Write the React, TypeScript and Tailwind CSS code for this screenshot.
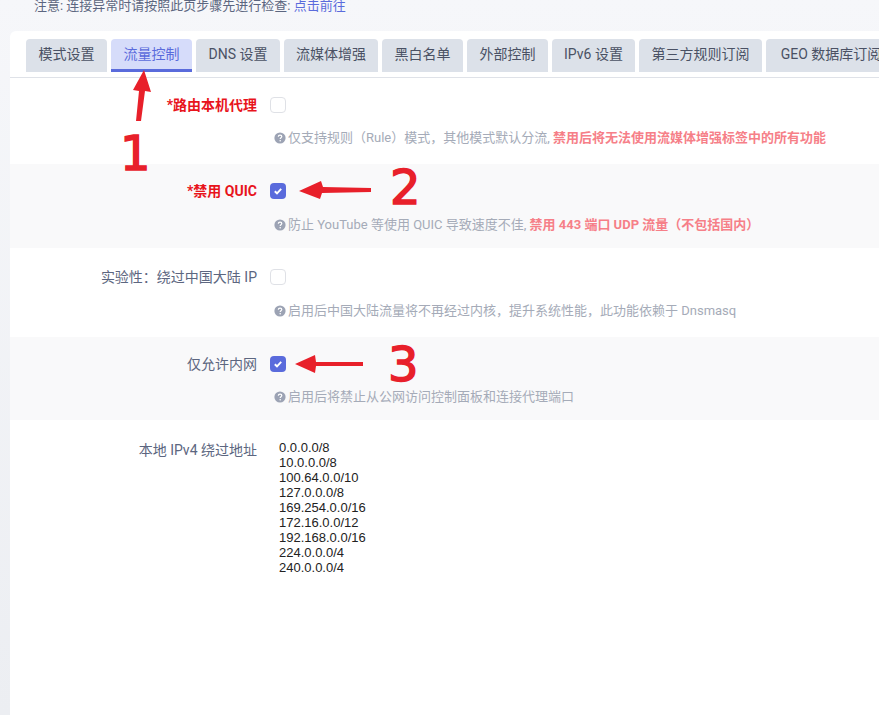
import React from "react";

const font = { fontFamily: '"Roboto","Noto Sans CJK SC","Noto Sans",sans-serif' };

const tabs: { label: string; cls: string; active?: boolean }[] = [
  { label: "模式设置", cls: "w-[81px]" },
  { label: "流量控制", cls: "w-[81px]", active: true },
  { label: "DNS 设置", cls: "w-[84px]" },
  { label: "流媒体增强", cls: "w-[94px]" },
  { label: "黑白名单", cls: "w-[81px]" },
  { label: "外部控制", cls: "w-[81px]" },
  { label: "IPv6 设置", cls: "w-[83px]" },
  { label: "第三方规则订阅", cls: "w-[123px]" },
  { label: "GEO 数据库订阅", cls: "w-[130px]" },
];

function Help() {
  return (
    <svg width="12" height="12" viewBox="0 0 12 12" className="shrink-0">
      <circle cx="6" cy="6" r="5.6" fill="#9ca3b4" />
      <path d="M4.3 4.7c0-1 .8-1.6 1.8-1.6s1.7.6 1.7 1.5c0 1.2-1.6 1.2-1.6 2.4" fill="none" stroke="#fff" strokeWidth="1.2" />
      <circle cx="6.2" cy="8.8" r=".8" fill="#fff" />
    </svg>
  );
}

function Box({ checked }: { checked?: boolean }) {
  return checked ? (
    <span className="flex h-4 w-4 items-center justify-center rounded-[4px] bg-[#5a6bdc]">
      <svg width="10" height="10" viewBox="0 0 10 10">
        <path d="M1.8 5.2 4 7.3 8.2 2.9" fill="none" stroke="#fff" strokeWidth="1.9" />
      </svg>
    </span>
  ) : (
    <span className="block h-4 w-4 rounded-[4px] border border-[#dfe1e6] bg-white" />
  );
}

function Row({
  label,
  red,
  checked,
  gray,
  h,
  top,
  gap,
  children,
}: {
  label: string;
  red?: boolean;
  checked?: boolean;
  gray?: boolean;
  h: string;
  top: string;
  gap: string;
  children: React.ReactNode;
}) {
  return (
    <div className={`flex ${h} ${top} ${gray ? "bg-[#f9f9fa]" : "bg-white"}`}>
      <div
        className={`-mt-px w-[247px] text-right text-[14px] leading-[18px] whitespace-nowrap ${
          red ? "font-bold text-[#e8141c]" : "text-[#5c6680]"
        }`}
      >
        {label}
      </div>
      <div className="ml-[13px] flex flex-col">
        <Box checked={checked} />
        <div className={`${gap} flex items-center gap-[2px] pl-1 text-[13px] leading-[18px] whitespace-nowrap text-[#a5abb8]`}>
          <Help />
          <span>{children}</span>
        </div>
      </div>
    </div>
  );
}

const ips = [
  "0.0.0.0/8",
  "10.0.0.0/8",
  "100.64.0.0/10",
  "127.0.0.0/8",
  "169.254.0.0/16",
  "172.16.0.0/12",
  "192.168.0.0/16",
  "224.0.0.0/4",
  "240.0.0.0/4",
];

const numCls =
  "absolute text-[48px] leading-[50px] font-normal text-[#e8202a] [-webkit-text-stroke:1.5px_#e8202a]";
const numFont = { fontFamily: '"DejaVu Sans",sans-serif' };

export default function App() {
  return (
    <div
      style={font}
      className="relative h-[715px] w-[879px] overflow-hidden bg-gradient-to-b from-[#f6f7fa] to-[#eceef2]"
    >
      <div className="h-[31px] pl-[34px] text-[13px] leading-[11px] text-[#5c6680]">
        注意: 连接异常时请按照此页步骤先进行检查: <span className="text-[#5a6bdc]">点击前往</span>
      </div>
      <div className="ml-[10px] h-[684px] rounded-tl-[6px] bg-white">
        <div className="flex h-[47px] gap-1 overflow-hidden border-b border-[#dfe2e8] pt-2 pl-4">
          {tabs.map((t) => (
            <div
              key={t.label}
              className={`${t.cls} flex h-[33px] shrink-0 items-center justify-center rounded-t-[4px] text-[14px] whitespace-nowrap ${
                t.active
                  ? "border-b-[3px] border-[#5a6bdc] bg-[#d6dcfa] text-[#5a6bdc]"
                  : "bg-[#dce1e9] pb-[3px] text-[#4a5164]"
              }`}
            >
              {t.label}
            </div>
          ))}
        </div>
        <Row label="*路由本机代理" red h="h-[86px]" top="pt-[19px]" gap="mt-4">
          仅支持规则（Rule）模式，其他模式默认分流, <b className="text-[#f67f88]">禁用后将无法使用流媒体增强标签中的所有功能</b>
        </Row>
        <Row label="*禁用 QUIC" red checked gray h="h-[84px]" top="pt-[19px]" gap="mt-[17px]">
          防止 YouTube 等使用 QUIC 导致速度不佳, <b className="text-[#f67f88]">禁用 443 端口 UDP 流量（不包括国内）</b>
        </Row>
        <Row label="实验性：绕过中国大陆 IP" h="h-[89px]" top="pt-[21px]" gap="mt-[17px]">
          启用后中国大陆流量将不再经过内核，提升系统性能，此功能依赖于 Dnsmasq
        </Row>
        <Row label="仅允许内网" checked gray h="h-[83px]" top="pt-[19px]" gap="mt-4">
          启用后将禁止从公网访问控制面板和连接代理端口
        </Row>
        <div className="flex pt-[21px]">
          <div className="w-[247px] text-right text-[14px] leading-[18px] text-[#5c6680]">本地 IPv4 绕过地址</div>
          <div
            className="-mt-px ml-[22px] text-[13px] leading-[15px] text-[#222]"
            style={{ fontFamily: '"Liberation Sans",sans-serif' }}
          >
            {ips.map((ip) => (
              <div key={ip}>{ip}</div>
            ))}
          </div>
        </div>
      </div>

      <svg className="absolute top-0 left-0" width="879" height="715" viewBox="0 0 879 715">
        <g fill="#e8202a">
          <path d="M136 121 139 91 133 90 144 70 151 92 145 91 141 121Z" />
          <path d="M371 188 323 187 321 181 299 191 320 199 322 193 371 192Z" />
          <path d="M363 362 316 362 315 355 295 364 315 373 316 366 363 366Z" />
        </g>
      </svg>
      <div className={numCls} style={{ ...numFont, left: 120, top: 128 }}>1</div>
      <div className={numCls} style={{ ...numFont, left: 390, top: 162 }}>2</div>
      <div className={numCls} style={{ ...numFont, left: 388, top: 339 }}>3</div>
    </div>
  );
}
